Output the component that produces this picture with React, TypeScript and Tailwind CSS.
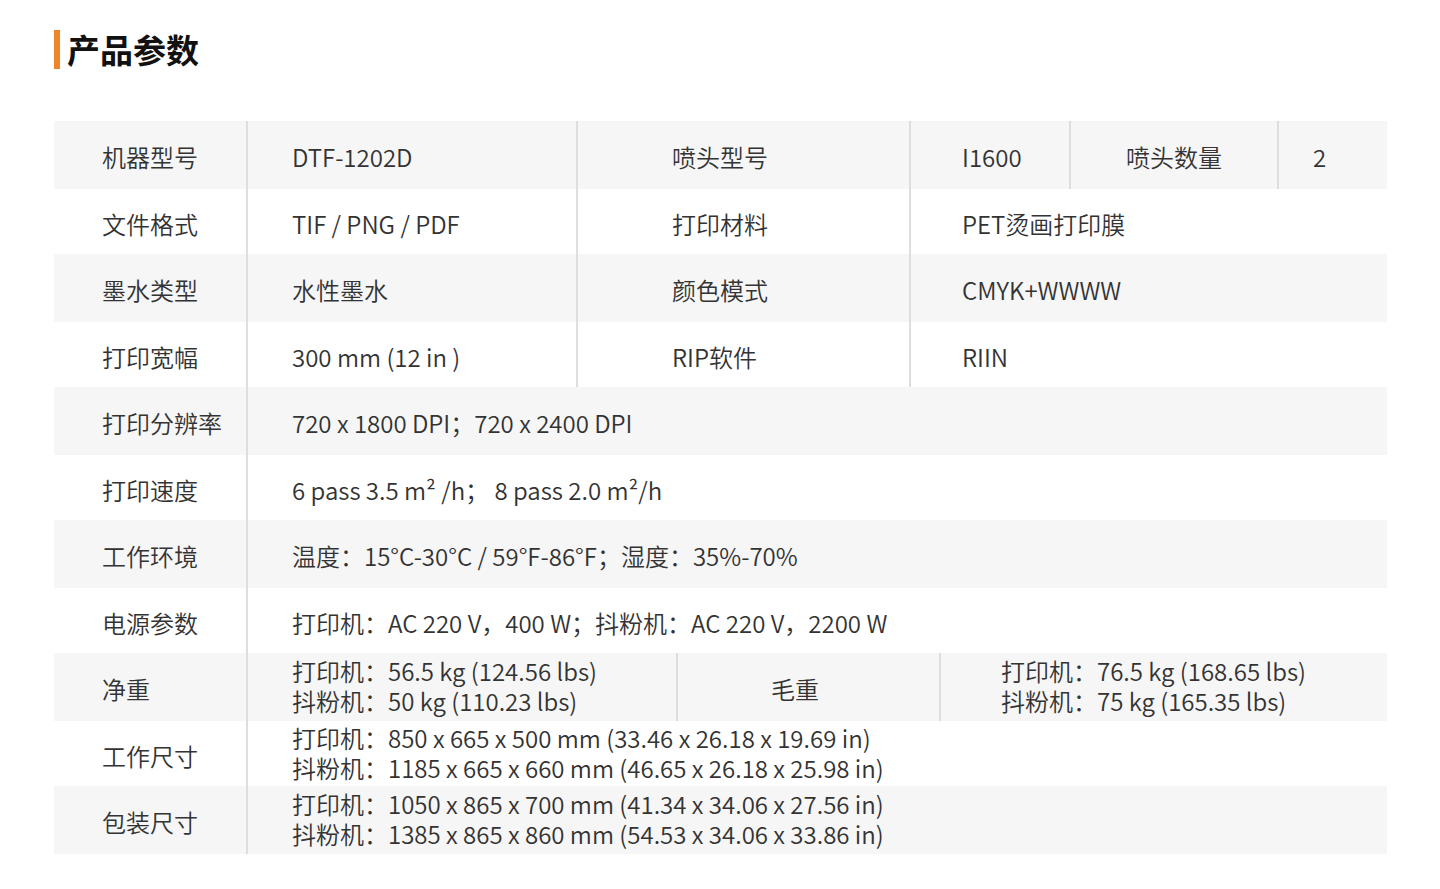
const rowGray = "bg-[#f6f6f6]";
const line = "border-r-2 border-[#e3dcdc]";

const Label = ({ children }: { children: React.ReactNode }) => (
  <div className={`w-[194px] shrink-0 flex items-center pl-[48px] ${line}`}>{children}</div>
);

const Row = ({ gray, children }: { gray?: boolean; children: React.ReactNode }) => (
  <div className={`flex ${gray ? "h-[68px] " + rowGray : "h-[65px] bg-white"}`}>{children}</div>
);

const TwoLines = ({ a, b }: { a: string; b: string }) => (
  <div className="flex flex-col leading-[30px] -mt-[6px]">
    <span>{a}</span>
    <span>{b}</span>
  </div>
);

export default function App() {
  return (
    <div
      className="w-[1440px] h-[889px] bg-white text-[#333] text-[24px] font-[350] pl-[54px] pr-[53px] pt-[30px]"
      style={{ fontFamily: '"Noto Sans CJK SC", "Noto Sans", sans-serif' }}
    >
      <div className="flex items-center gap-[7px] h-[39px]">
        <div className="w-[6px] h-[39px] bg-[#f0842a]" />
        <h1 className="text-[33px] font-bold text-[#111] leading-none">产品参数</h1>
      </div>

      <div className="mt-[52px] flex flex-col [&>div>div]:pt-[4px]">
        <Row gray>
          <Label>机器型号</Label>
          <div className={`w-[330px] flex items-center pl-[44px] ${line}`}>DTF-1202D</div>
          <div className={`w-[333px] flex items-center pl-[94px] ${line}`}>喷头型号</div>
          <div className={`w-[160px] flex items-center pl-[51px] ${line}`}>I1600</div>
          <div className={`w-[208px] flex items-center justify-center ${line}`}>喷头数量</div>
          <div className="flex-1 flex items-center pl-[34px]">2</div>
        </Row>
        <Row>
          <Label>文件格式</Label>
          <div className={`w-[330px] flex items-center pl-[44px] ${line}`}>TIF / PNG / PDF</div>
          <div className={`w-[333px] flex items-center pl-[94px] ${line}`}>打印材料</div>
          <div className="flex-1 flex items-center pl-[51px]">PET烫画打印膜</div>
        </Row>
        <Row gray>
          <Label>墨水类型</Label>
          <div className={`w-[330px] flex items-center pl-[44px] ${line}`}>水性墨水</div>
          <div className={`w-[333px] flex items-center pl-[94px] ${line}`}>颜色模式</div>
          <div className="flex-1 flex items-center pl-[51px]">CMYK+WWWW</div>
        </Row>
        <Row>
          <Label>打印宽幅</Label>
          <div className={`w-[330px] flex items-center pl-[44px] ${line}`}>300 mm (12 in )</div>
          <div className={`w-[333px] flex items-center pl-[94px] ${line}`}>RIP软件</div>
          <div className="flex-1 flex items-center pl-[51px]">RIIN</div>
        </Row>
        <Row gray>
          <Label>打印分辨率</Label>
          <div className="flex-1 flex items-center pl-[44px]">720 x 1800 DPI；720 x 2400 DPI</div>
        </Row>
        <Row>
          <Label>打印速度</Label>
          <div className="flex-1 flex items-center pl-[44px] whitespace-pre">6 pass 3.5 m² /h； 8 pass 2.0 m²/h</div>
        </Row>
        <Row gray>
          <Label>工作环境</Label>
          <div className="flex-1 flex items-center pl-[44px]">温度：15°C-30°C / 59°F-86°F；湿度：35%-70%</div>
        </Row>
        <Row>
          <Label>电源参数</Label>
          <div className="flex-1 flex items-center pl-[44px]">打印机：AC 220 V，400 W；抖粉机：AC 220 V，2200 W</div>
        </Row>
        <Row gray>
          <Label>净重</Label>
          <div className={`w-[430px] flex items-center pl-[44px] ${line}`}>
            <TwoLines a="打印机：56.5 kg (124.56 lbs)" b="抖粉机：50 kg (110.23 lbs)" />
          </div>
          <div className={`w-[263px] flex items-center pl-[93px] ${line}`}>毛重</div>
          <div className="flex-1 flex items-center pl-[60px]">
            <TwoLines a="打印机：76.5 kg (168.65 lbs)" b="抖粉机：75 kg (165.35 lbs)" />
          </div>
        </Row>
        <Row>
          <Label>工作尺寸</Label>
          <div className="flex-1 flex items-center pl-[44px]">
            <TwoLines
              a="打印机：850 x 665 x 500 mm (33.46 x 26.18 x 19.69 in)"
              b="抖粉机：1185 x 665 x 660 mm (46.65 x 26.18 x 25.98 in)"
            />
          </div>
        </Row>
        <Row gray>
          <Label>包装尺寸</Label>
          <div className="flex-1 flex items-center pl-[44px]">
            <TwoLines
              a="打印机：1050 x 865 x 700 mm (41.34 x 34.06 x 27.56 in)"
              b="抖粉机：1385 x 865 x 860 mm (54.53 x 34.06 x 33.86 in)"
            />
          </div>
        </Row>
      </div>
    </div>
  );
}
